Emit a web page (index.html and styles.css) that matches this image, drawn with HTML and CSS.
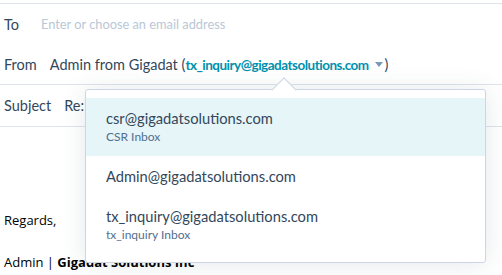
FILE: index.html
```html
<!DOCTYPE html>
<html>
<head>
<meta charset="utf-8">
<link rel="stylesheet" href="styles.css">
</head>
<body>
<div class="composer">
  <div class="row row-to">
    <span class="label">To</span>
    <span class="placeholder">Enter or choose an email address</span>
  </div>
  <div class="row row-from">
    <span class="label">From</span>
    <span class="from">Admin from Gigadat (<span class="email">tx_inquiry@gigadatsolutions.com</span><svg class="caret" width="8" height="5" viewBox="0 0 8 5"><path d="M0 0h8L4 5z" fill="#7c98b6"/></svg>)</span>
  </div>
  <div class="row row-subject">
    <span class="label">Subject</span>
    <span class="subject">Re:</span>
  </div>
  <div class="body">
    <p class="gap"></p>
    <p class="regards">Regards,</p>
    <p>Admin | <b>Gigadat Solutions Inc</b></p>
  </div>

  <div class="popover">
    <div class="arrow"></div>
    <ul class="menu">
      <li class="item active">
        <div class="addr">csr@gigadatsolutions.com</div>
        <div class="sub">CSR Inbox</div>
      </li>
      <li class="item">
        <div class="addr">Admin@gigadatsolutions.com</div>
      </li>
      <li class="item">
        <div class="addr">tx_inquiry@gigadatsolutions.com</div>
        <div class="sub">tx_inquiry Inbox</div>
      </li>
    </ul>
  </div>
</div>
</body>
</html>
```

FILE: styles.css
```css
html, body {
  margin: 0;
  padding: 0;
  background: #fff;
}
.composer {
  position: relative;
  padding-top: 3px;
  font-family: Lato, "Noto Sans", sans-serif;
  color: #33475b;
  font-size: 14.5px;
}
.row {
  display: flex;
  align-items: center;
  height: 40px;
  padding-left: 4px;
}
.row-to {
  border-top: 1px solid #dfe3eb;
}
.row-from {
  border-bottom: 1px solid #dfe3eb;
}
.row-subject {
  height: 41px;
  border-bottom: 1px solid #dfe3eb;
}
.label {
  margin-right: 13px;
}
.placeholder {
  color: #b9c7d6;
  font-size: 12.8px;
  margin-left: 9px;
}
.email {
  color: #0091ae;
  font-weight: 700;
  font-size: 13.5px;
  letter-spacing: -0.5px;
}
.caret {
  margin: 0 2px 2px 6px;
  vertical-align: middle;
}
.body {
  padding-left: 4px;
  font-family: "Open Sans", "Noto Sans", sans-serif;
  font-size: 13px;
  color: #000;
}
.body p {
  margin: 0;
  height: 38px;
  line-height: 38px;
}
.body .gap {
  height: 74px;
}
.body .regards {
  height: 42px;
}
.popover {
  position: absolute;
  left: 85px;
  top: 89px;
  width: 399px;
  background: #fff;
  border: 1px solid #cbd6e2;
  border-radius: 3px;
  box-shadow: 0 1px 24px 0 rgba(45, 62, 80, 0.12);
}
.arrow {
  position: absolute;
  left: 189px;
  top: -9px;
  width: 17px;
  height: 17px;
  background: #fff;
  border-left: 1px solid #cbd6e2;
  border-top: 1px solid #cbd6e2;
  transform: rotate(45deg);
}
.menu {
  list-style: none;
  margin: 0;
  padding: 8px 0;
  position: relative;
}
.item {
  padding: 10px 20px;
}
.item.active {
  background: #e5f5f8;
}
.addr {
  font-size: 14.7px;
  line-height: 20px;
  color: #33475b;
}
.sub {
  font-size: 12px;
  line-height: 18px;
  color: #516f90;
}
```
